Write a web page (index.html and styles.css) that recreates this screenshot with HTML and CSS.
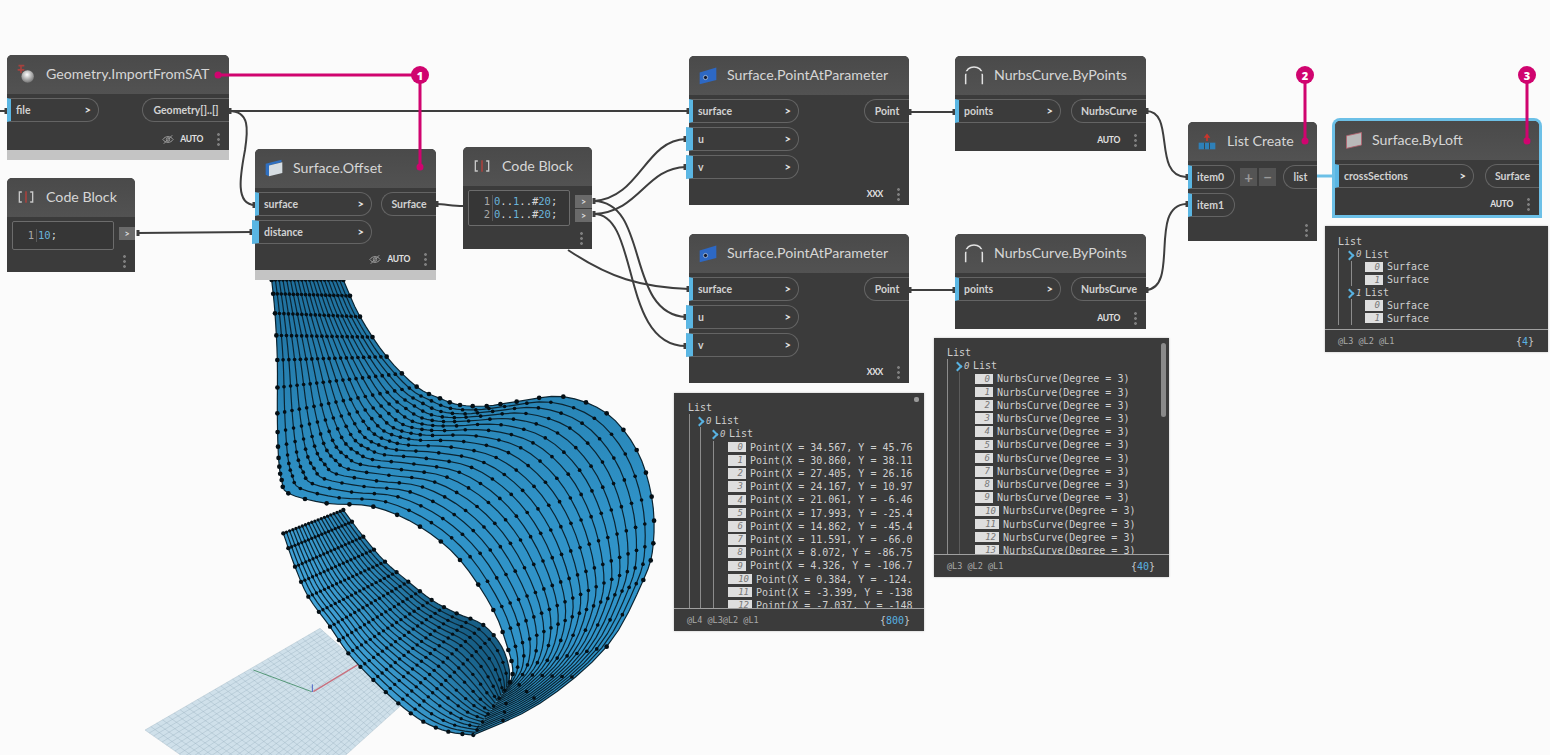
FILE: index.html
```html
<!DOCTYPE html>
<html lang="en">
<head>
<meta charset="utf-8">
<title>Dynamo graph</title>
<link rel="stylesheet" href="styles.css">
</head>
<body>
<main class="canvas">
  <svg class="surface" id="surface" viewBox="0 0 1590 1425" aria-hidden="true"></svg>

  <svg class="wires" viewBox="0 0 1550 755" aria-hidden="true">
    <path d="M0 111H8"/>
    <path d="M229 111C400 110 560 112 689 111"/>
    <path d="M229 111C250 111 248 130 245 150C241 172 234 205 255 205"/>
    <path d="M137 233L252 232"/>
    <path d="M436 204C445 204 452 206 463 206"/>
    <path d="M594 201C640 198 645 140 686 139"/>
    <path d="M594 214C640 212 645 168 686 167"/>
    <path d="M594 201C650 202 625 314 686 317"/>
    <path d="M594 214C640 214 620 346 686 346"/>
    <path d="M568 250C610 278 640 287 689 289"/>
    <path d="M909 112H955"/>
    <path d="M909 290H955"/>
    <path d="M1146 111C1176 111 1152 176 1186 177"/>
    <path d="M1146 290C1180 288 1148 206 1186 204"/>
    <path class="wire-live" d="M1317 176H1336"/>
    <path class="tick" d="M6 108v6M230 108v6M254 202v6M138 230v6M251 229v6M437 201v6M594 198v6M594 211v6M688 108v6M685 136v6M685 164v6M688 286v6M685 314v6M685 343v6M910 109v6M954 109v6M910 287v6M954 287v6M1147 108v6M1147 287v6M1187 174v6M1187 201v6"/>
  </svg>

  <article class="node n-import">
    <header class="head">
      <svg class="icon" viewBox="0 0 24 24"><path class="i-red" d="M3 2h7M6 2v9M2 7h8"/><defs><radialGradient id="ball" cx=".45" cy=".35" r=".7"><stop offset="0" stop-color="#fff"/><stop offset="1" stop-color="#6a6a6a"/></radialGradient></defs><circle cx="14" cy="15" r="7.500" fill="url(#ball)"/></svg>
      <h2>Geometry.ImportFromSAT</h2>
    </header>
    <div class="body">
      <div class="ports">
        <div class="inputs w-92"><div class="in">file<b>&gt;</b></div></div>
        <div class="out o-87">Geometry[]..[]</div>
      </div>
      <footer class="foot"><svg class="eye" viewBox="0 0 14 12"><path d="M1 6c3-4.500 9-4.500 12 0c-3 4.500-9 4.500-12 0zM2 11L12 1"/><circle cx="7" cy="6" r="2"/></svg><span>AUTO</span><i class="dots"></i></footer>
    </div>
    <div class="status"></div>
  </article>

  <article class="node n-code1">
    <header class="head">
      <svg class="icon" viewBox="0 0 24 24"><path class="i-lite" d="M7 6H4v12h3M17 6h3v12h-3"/><path class="i-red" d="M12 5v14"/></svg>
      <h2>Code Block</h2>
    </header>
    <div class="code">
      <div class="editor"><div class="cl"><span class="ln">1</span><span class="blue">10</span>;</div></div>
      <div class="code-outs"><span>&gt;</span></div>
    </div>
    <footer class="foot"><i class="dots"></i></footer>
  </article>

  <article class="node n-offset">
    <header class="head">
      <svg class="icon" viewBox="0 0 24 24"><path fill="#2f6fc0" d="M2 7l19-5v3l-15 4v13l-4-2z"/><path fill="#d6dde2" d="M6 9l16-4v13L6 22z"/></svg>
      <h2>Surface.Offset</h2>
    </header>
    <div class="body">
      <div class="ports">
        <div class="inputs w-117"><div class="in">surface<b>&gt;</b></div><div class="in wide">distance<b>&gt;</b></div></div>
        <div class="out o-55">Surface</div>
      </div>
      <footer class="foot"><svg class="eye" viewBox="0 0 14 12"><path d="M1 6c3-4.500 9-4.500 12 0c-3 4.500-9 4.500-12 0zM2 11L12 1"/><circle cx="7" cy="6" r="2"/></svg><span>AUTO</span><i class="dots"></i></footer>
    </div>
    <div class="status"></div>
  </article>

  <article class="node n-code2">
    <header class="head">
      <svg class="icon" viewBox="0 0 24 24"><path class="i-lite" d="M7 6H4v12h3M17 6h3v12h-3"/><path class="i-red" d="M12 5v14"/></svg>
      <h2>Code Block</h2>
    </header>
    <div class="code">
      <div class="editor">
        <div class="cl"><span class="ln">1</span><span class="blue">0</span>..<span class="blue">1</span>..#<span class="blue">20</span>;</div>
        <div class="cl"><span class="ln">2</span><span class="blue">0</span>..<span class="blue">1</span>..#<span class="blue">20</span>;</div>
      </div>
      <div class="code-outs"><span>&gt;</span><span>&gt;</span></div>
    </div>
    <footer class="foot"><i class="dots"></i></footer>
  </article>

  <article class="node n-pap1">
    <header class="head">
      <svg class="icon" viewBox="0 0 24 24"><path fill="#2d68c4" d="M2 9l20-6v15L2 23z"/><circle cx="9" cy="15" r="2.500" fill="#101830" stroke="#cde" stroke-width=".8"/></svg>
      <h2>Surface.PointAtParameter</h2>
    </header>
    <div class="body">
      <div class="ports">
        <div class="inputs w-110"><div class="in">surface<b>&gt;</b></div><div class="in wide">u<b>&gt;</b></div><div class="in wide">v<b>&gt;</b></div></div>
        <div class="out o-45">Point</div>
      </div>
      <footer class="foot"><span>XXX</span><i class="dots"></i></footer>
    </div>
  </article>

  <article class="node n-pap2">
    <header class="head">
      <svg class="icon" viewBox="0 0 24 24"><path fill="#2d68c4" d="M2 9l20-6v15L2 23z"/><circle cx="9" cy="15" r="2.500" fill="#101830" stroke="#cde" stroke-width=".8"/></svg>
      <h2>Surface.PointAtParameter</h2>
    </header>
    <div class="body">
      <div class="ports">
        <div class="inputs w-110"><div class="in">surface<b>&gt;</b></div><div class="in wide">u<b>&gt;</b></div><div class="in wide">v<b>&gt;</b></div></div>
        <div class="out o-45">Point</div>
      </div>
      <footer class="foot"><span>XXX</span><i class="dots"></i></footer>
    </div>
  </article>

  <article class="node n-nurbs1">
    <header class="head">
      <svg class="icon" viewBox="0 0 24 24"><path class="i-arc" d="M2 23V12C2 -1 22 -1 22 12v11"/><path class="i-gap" d="M0 9h6M18 9h6"/></svg>
      <h2>NurbsCurve.ByPoints</h2>
    </header>
    <div class="body">
      <div class="ports">
        <div class="inputs w-106"><div class="in">points<b>&gt;</b></div></div>
        <div class="out o-75">NurbsCurve</div>
      </div>
      <footer class="foot"><span>AUTO</span><i class="dots"></i></footer>
    </div>
  </article>

  <article class="node n-nurbs2">
    <header class="head">
      <svg class="icon" viewBox="0 0 24 24"><path class="i-arc" d="M2 23V12C2 -1 22 -1 22 12v11"/><path class="i-gap" d="M0 9h6M18 9h6"/></svg>
      <h2>NurbsCurve.ByPoints</h2>
    </header>
    <div class="body">
      <div class="ports">
        <div class="inputs w-106"><div class="in">points<b>&gt;</b></div></div>
        <div class="out o-75">NurbsCurve</div>
      </div>
      <footer class="foot"><span>AUTO</span><i class="dots"></i></footer>
    </div>
  </article>

  <article class="node n-list">
    <header class="head">
      <svg class="icon" viewBox="0 0 24 24"><path fill="#c9352c" d="M12 3l4 5h-3v4h-2V8H8z"/><path fill="#2e80b8" d="M2 14h20v8H2z"/><path stroke="#3b3b3b" d="M9 14v8M15 14v8"/></svg>
      <h2>List Create</h2>
    </header>
    <div class="body">
      <div class="ports">
        <div class="inputs w-47"><div class="in tight">item0</div><div class="in tight">item1</div></div>
        <div class="plusminus"><span>+</span><span>−</span></div>
        <div class="out o-34">list</div>
      </div>
      <footer class="foot"><i class="dots"></i></footer>
    </div>
  </article>

  <article class="node n-loft">
    <header class="head">
      <svg class="icon" viewBox="0 0 24 24"><path fill="#b9b9b9" stroke="#b5606e" d="M3 7l18-4v15L3 22z"/></svg>
      <h2>Surface.ByLoft</h2>
    </header>
    <div class="body">
      <div class="ports">
        <div class="inputs w-139"><div class="in">crossSections<b>&gt;</b></div></div>
        <div class="out o-54">Surface</div>
      </div>
      <footer class="foot"><span>AUTO</span><i class="dots"></i></footer>
    </div>
  </article>

  <section class="watch w-points">
    <div class="w-body">
      <div class="w-line">List</div>
      <div class="lvl l-a">
        <div class="w-line"><i class="chev"></i><em>0</em>List</div>
        <div class="lvl l-b">
          <div class="w-line"><i class="chev"></i><em>0</em>List</div>
          <div class="lvl l-c">
            <div class="w-line"><em class="idx">0</em>Point(X = 34.567, Y = 45.76</div>
            <div class="w-line"><em class="idx">1</em>Point(X = 30.860, Y = 38.11</div>
            <div class="w-line"><em class="idx">2</em>Point(X = 27.405, Y = 26.16</div>
            <div class="w-line"><em class="idx">3</em>Point(X = 24.167, Y = 10.97</div>
            <div class="w-line"><em class="idx">4</em>Point(X = 21.061, Y = -6.46</div>
            <div class="w-line"><em class="idx">5</em>Point(X = 17.993, Y = -25.4</div>
            <div class="w-line"><em class="idx">6</em>Point(X = 14.862, Y = -45.4</div>
            <div class="w-line"><em class="idx">7</em>Point(X = 11.591, Y = -66.0</div>
            <div class="w-line"><em class="idx">8</em>Point(X = 8.072, Y = -86.75</div>
            <div class="w-line"><em class="idx">9</em>Point(X = 4.326, Y = -106.7</div>
            <div class="w-line"><em class="idx two">10</em>Point(X = 0.384, Y = -124.</div>
            <div class="w-line"><em class="idx two">11</em>Point(X = -3.399, Y = -138</div>
            <div class="w-line"><em class="idx two">12</em>Point(X = -7.037, Y = -148</div>
          </div>
        </div>
      </div>
      <i class="knob"></i>
    </div>
    <footer class="w-foot"><span>@L4 @L3@L2 @L1</span><span class="count">{<b>800</b>}</span></footer>
  </section>

  <section class="watch w-curves">
    <div class="w-body">
      <div class="w-line">List</div>
      <div class="lvl l-d">
        <div class="w-line"><i class="chev"></i><em>0</em>List</div>
        <div class="lvl l-e">
          <div class="w-line"><em class="idx">0</em>NurbsCurve(Degree = 3)</div>
          <div class="w-line"><em class="idx">1</em>NurbsCurve(Degree = 3)</div>
          <div class="w-line"><em class="idx">2</em>NurbsCurve(Degree = 3)</div>
          <div class="w-line"><em class="idx">3</em>NurbsCurve(Degree = 3)</div>
          <div class="w-line"><em class="idx">4</em>NurbsCurve(Degree = 3)</div>
          <div class="w-line"><em class="idx">5</em>NurbsCurve(Degree = 3)</div>
          <div class="w-line"><em class="idx">6</em>NurbsCurve(Degree = 3)</div>
          <div class="w-line"><em class="idx">7</em>NurbsCurve(Degree = 3)</div>
          <div class="w-line"><em class="idx">8</em>NurbsCurve(Degree = 3)</div>
          <div class="w-line"><em class="idx">9</em>NurbsCurve(Degree = 3)</div>
          <div class="w-line"><em class="idx two">10</em>NurbsCurve(Degree = 3)</div>
          <div class="w-line"><em class="idx two">11</em>NurbsCurve(Degree = 3)</div>
          <div class="w-line"><em class="idx two">12</em>NurbsCurve(Degree = 3)</div>
          <div class="w-line"><em class="idx two">13</em>NurbsCurve(Degree = 3)</div>
        </div>
      </div>
      <i class="scroll"></i>
    </div>
    <footer class="w-foot"><span>@L3 @L2 @L1</span><span class="count">{<b>40</b>}</span></footer>
  </section>

  <section class="watch w-loft">
    <div class="w-body">
      <div class="w-line">List</div>
      <div class="lvl l-f">
        <div class="w-line"><i class="chev"></i><em>0</em>List</div>
        <div class="lvl l-g">
          <div class="w-line"><em class="idx">0</em>Surface</div>
          <div class="w-line"><em class="idx">1</em>Surface</div>
        </div>
        <div class="w-line"><i class="chev"></i><em>1</em>List</div>
        <div class="lvl l-g">
          <div class="w-line"><em class="idx">0</em>Surface</div>
          <div class="w-line"><em class="idx">1</em>Surface</div>
        </div>
      </div>
    </div>
    <footer class="w-foot"><span>@L3 @L2 @L1</span><span class="count">{<b>4</b>}</span></footer>
  </section>

  <svg class="callouts" viewBox="0 0 1550 755" aria-hidden="true">
    <path d="M218 75H420V167M1305 75V141M1527 75V141"/>
    <circle cx="218" cy="75" r="3.500"/><circle cx="420" cy="167" r="3.500"/><circle cx="1305" cy="141" r="3.500"/><circle cx="1527" cy="141" r="3.500"/>
  </svg>
  <span class="badge b-1">1</span>
  <span class="badge b-2">2</span>
  <span class="badge b-3">3</span>
</main>
<script src="app.js"></script>
</body>
</html>
```

FILE: styles.css
```css
* { box-sizing: border-box; }
html, body { margin: 0; height: 100%; }
body { background: #fbfbfb; font-family: "Lato", "Open Sans", "Liberation Sans", sans-serif; overflow: hidden; }
.canvas { position: relative; width: 1550px; height: 755px; overflow: hidden; }

/* free-canvas items */
.surface { position: absolute; left: 140px; top: 280px; width: 530px; height: 475px; }
.wires, .callouts { position: absolute; left: 0; top: 0; width: 1550px; height: 755px; pointer-events: none; }
.wires path { fill: none; stroke: #3e3e3e; stroke-width: 2; }
.wires .wire-live { stroke: #6cc0e7; stroke-width: 3; }
.wires .tick { stroke-width: 3; }
.callouts path { fill: none; stroke: #d0046f; stroke-width: 3; }
.callouts circle { fill: #d0046f; }

.node { position: absolute; display: flex; flex-direction: column; background: #3b3b3b; color: #d8d8d8; border-radius: 5px 5px 0 0; }
.n-import { left: 7px; top: 55px; width: 222px; height: 105px; }
.n-code1 { left: 7px; top: 178px; width: 128px; height: 94px; }
.n-offset { left: 255px; top: 149px; width: 181px; height: 131px; }
.n-code2 { left: 463px; top: 147px; width: 129px; height: 102px; }
.n-pap1 { left: 689px; top: 56px; width: 220px; height: 149px; }
.n-pap2 { left: 689px; top: 234px; width: 220px; height: 149px; }
.n-nurbs1 { left: 955px; top: 56px; width: 191px; height: 95px; }
.n-nurbs2 { left: 955px; top: 234px; width: 191px; height: 95px; }
.n-list { left: 1188px; top: 122px; width: 129px; height: 119px; }
.n-loft { left: 1335px; top: 121px; width: 204px; height: 94px; box-shadow: 0 0 0 3px #6cc0e7; }

.head { flex: none; height: 39px; display: flex; align-items: center; gap: 9px; padding: 0 0 2px 9px; background: linear-gradient(#4a4a4a, #525252); border-radius: 5px 5px 0 0; }
.n-import .head, .n-code1 .head, .n-code2 .head, .n-nurbs1 .head, .n-nurbs2 .head, .n-list .head { gap: 10px; }
.n-loft .head { gap: 8px; }
.head h2 { margin: 0; font-size: 14.200px; font-weight: 400; color: #d6d6d6; white-space: nowrap; }
.icon { flex: none; width: 20px; height: 20px; fill: none; overflow: visible; }
.i-red { stroke: #a5423e; stroke-width: 2; fill: none; }
.i-lite { stroke: #c8c8c8; stroke-width: 1.600; fill: none; }
.i-arc { stroke: #e2e2e2; stroke-width: 1.800; fill: none; }
.i-gap { stroke: #4e4e4e; stroke-width: 3; fill: none; }

.body { flex: 1; display: flex; flex-direction: column; min-height: 0; }
.ports { display: flex; justify-content: space-between; align-items: flex-start; padding-top: 4px; }
.inputs { display: flex; flex-direction: column; gap: 4px; }
.w-47 { width: 47px; } .w-92 { width: 92px; } .w-106 { width: 106px; } .w-110 { width: 110px; } .w-117 { width: 117px; } .w-139 { width: 139px; }
.in { height: 24px; display: flex; align-items: center; justify-content: space-between; padding: 0 7px 1px 5px; border: 1px solid #646464; border-left: 4px solid #5ab6e3; border-radius: 0 12px 12px 0; font-size: 10.500px; font-weight: 700; color: #d2d2d2; }
.in b { font-size: 11px; font-weight: 700; color: #e4e4e4; }
.in.wide { margin-left: -3px; border-left-width: 7px; }
.in.tight { padding-right: 0; }
.out { height: 24px; display: flex; align-items: center; justify-content: center; padding-bottom: 1px; border: 1px solid #646464; border-right: 0; border-radius: 12px 0 0 12px; font-size: 10.500px; font-weight: 700; color: #d2d2d2; white-space: nowrap; }
.o-34 { width: 34px; } .o-45 { width: 45px; } .o-54 { width: 54px; } .o-55 { width: 55px; } .o-75 { width: 75px; } .o-87 { width: 87px; }
.plusminus { display: flex; gap: 2px; margin: 3px auto 0 5px; }
.plusminus span { width: 17px; height: 18px; display: flex; align-items: center; justify-content: center; background: #545454; color: #9a9a9a; font-size: 15px; font-weight: 700; line-height: 1; }
.foot { flex: none; height: 22px; margin-top: auto; display: flex; align-items: center; justify-content: flex-end; padding-right: 9px; font-size: 8.500px; font-weight: 700; color: #e2e2e2; }
.foot span { margin-right: 14px; letter-spacing: -.3px; }
.eye { width: 12px; height: 11px; margin-right: 6px; fill: none; stroke: #a8a8a8; stroke-width: 1; }
.dots { width: 3px; height: 15px; background: radial-gradient(circle, #7e7e7e 1.300px, transparent 1.500px) 0 0 / 3px 5px repeat-y; }
.status { flex: none; height: 10px; background: #c4c4c4; }

.code { display: flex; align-items: flex-start; gap: 5px; padding: 4px 0 0 5px; }
.editor { width: 102px; padding: 4px 0; border: 1px solid #6c6c6c; border-radius: 2px; background: #363636; font-family: "DejaVu Sans Mono", monospace; font-size: 10.500px; line-height: 13px; color: #d8d8d8; }
.n-code1 .editor { padding: 7px 0; }
.cl { white-space: pre; }
.ln { display: inline-block; width: 24px; padding-right: 2px; margin-right: 1px; text-align: right; color: #a8a8a8; border-right: 1px solid #5a5a5a; }
.blue { color: #69b3da; }
.code-outs { display: flex; flex-direction: column; gap: 1px; padding-top: 5px; flex: 1; }
.n-code1 .code-outs { padding-top: 6px; }
.code-outs span { height: 13px; display: flex; align-items: center; justify-content: center; background: #6a6a6a; color: #ddd; font-size: 9px; font-weight: 700; }

.watch { position: absolute; display: flex; flex-direction: column; background: #3b3b3b; color: #cfcfcf; font-family: "DejaVu Sans Mono", monospace; font-size: 10px; box-shadow: 0 0 2px rgba(0,0,0,.25); }
.w-points { left: 674px; top: 393px; width: 250px; height: 238px; }
.w-curves { left: 934px; top: 338px; width: 235px; height: 239px; }
.w-loft { left: 1325px; top: 226px; width: 223px; height: 126px; }
.w-body { position: relative; flex: 1; overflow: hidden; min-height: 0; padding: 8px 0 0 14px; }
.w-curves .w-body, .w-loft .w-body { padding-left: 13px; }
.w-loft .w-body { padding-top: 9px; }
.w-line { height: 13.200px; display: flex; align-items: center; white-space: nowrap; }
.w-loft .w-line { height: 12.800px; }
.lvl { border-left: 1px solid #8c8c8c; }
.l-a { padding-left: 8px; margin-left: 1px; }
.l-b { margin-left: 2px; padding-left: 11px; }
.l-c { margin-left: 1px; padding-left: 14px; }
.l-d { padding-left: 8px; }
.l-e { margin-left: 3px; padding-left: 15px; border-left-color: #5c5c5c; }
.l-f { padding-left: 9px; }
.l-g { margin-left: 3px; padding-left: 13px; }
.chev { flex: none; width: 8px; height: 9px; position: relative; }
.chev::before { content: ""; position: absolute; left: -2px; top: 2px; width: 5px; height: 5px; border: solid #58b2e2; border-width: 2px 2px 0 0; transform: rotate(45deg); }
.w-line > em:not(.idx) { flex: none; width: 9px; font-size: 9px; color: #c8c8c8; }
.idx { flex: none; width: 18px; height: 10.500px; margin-right: 4px; padding-right: 3px; background: #dedede; color: #777; font-size: 9px; line-height: 10.500px; text-align: right; }
.idx.two { width: 24px; }
.knob { position: absolute; right: 5px; top: 4px; width: 5px; height: 5px; border-radius: 2px; background: #9a9a9a; }
.scroll { position: absolute; right: 3px; top: 5px; width: 5px; height: 74px; border-radius: 3px; background: #8a8a8a; }
.w-foot { flex: none; height: 23px; display: flex; align-items: center; justify-content: space-between; padding: 0 14px 0 13px; border-top: 1px solid #a0a0a0; font-size: 8.500px; color: #aaa; }
.count { font-size: 10px; color: #c8c8c8; }
.count b { font-weight: 400; color: #58b2e2; }

.badge { position: absolute; width: 18px; height: 18px; display: flex; align-items: center; justify-content: center; border-radius: 50%; background: #d0046f; color: #fff; font-family: "Open Sans", sans-serif; font-size: 11px; font-weight: 800; line-height: 1; }
.b-1 { left: 411px; top: 66px; }
.b-2 { left: 1296px; top: 66px; }
.b-3 { left: 1518px; top: 66px; }
```

FILE: app.js
```js
(function () {
  var svg = document.getElementById('surface');

  function spline(p, n) {
    var out = [];
    for (var i = 0; i < p.length - 1; i++) {
      var a = p[Math.max(i - 1, 0)], b = p[i], c = p[i + 1], d = p[Math.min(i + 2, p.length - 1)];
      for (var k = 0; k < n; k++) {
        var t = k / n, t2 = t * t, t3 = t2 * t;
        out.push([0, 1].map(function (j) {
          return 0.5 * (2 * b[j] + (c[j] - a[j]) * t + (2 * a[j] - 5 * b[j] + 4 * c[j] - d[j]) * t2 + (3 * b[j] - a[j] - 3 * c[j] + d[j]) * t3);
        }));
      }
    }
    out.push(p[p.length - 1]);
    return out;
  }
  function mix(a, b, s) { return [a[0] + (b[0] - a[0]) * s, a[1] + (b[1] - a[1]) * s]; }
  function line(pts) { return 'M' + pts.map(function (q) { return q[0].toFixed(1) + ' ' + q[1].toFixed(1); }).join('L'); }

  /* thinFrom: sample index after which crowded dots are dropped (the hairpin at the bottom) */
  function band(A, B, lines, fill, step, rEdge, rMid, thinFrom) {
    var a = spline(A, 4), b = spline(B, 4), h = '';
    h += '<path fill="' + fill + '" d="' + line(a.concat(b.slice().reverse())) + 'Z"/>';
    var paths = '', dots = '', kept = [];
    for (var s = 0; s <= lines; s++) {
      var f = s / lines;
      var pts = a.map(function (q, i) { return mix(q, b[i], f); });
      paths += line(pts);
      pts.forEach(function (q, i) {
        if (i % step !== 0) return;
        if (i >= thinFrom) {
          var crowded = kept.some(function (k) { return Math.hypot(k[0] - q[0], k[1] - q[1]) < 24; });
          if (crowded) return;
          kept.push(q);
        }
        var edge = s === 0 || s === lines;
        dots += '<circle cx="' + q[0].toFixed(1) + '" cy="' + q[1].toFixed(1) + '" r="' + (edge ? rEdge : rMid) + '"/>';
      });
    }
    h += '<path d="' + paths + '" fill="none" stroke="#0b2431" stroke-width="3.600"/>';
    h += '<g fill="#050f15">' + dots + '</g>';
    return h;
  }

  /* ground plane */
  var P00 = [15, 1350], P10 = [540, 1045], P11 = [790, 1270], P01 = [400, 1620];
  var g = '<path fill="#cfe0ea" d="' + line([P00, P10, P11, P01]) + 'Z"/>', grid = '';
  for (var i = 0; i <= 30; i++) {
    var u = i / 30;
    grid += line([mix(P00, P10, u), mix(P01, P11, u)]);
    grid += line([mix(P00, P01, u), mix(P10, P11, u)]);
  }
  g += '<path d="' + grid + '" fill="none" stroke="#8fa9b7" stroke-width="1.500" opacity=".65"/>';
  g += '<path d="M340 1170L515 1235" fill="none" stroke="#3f8a63" stroke-width="2.500"/>';
  g += '<path d="M520 1235L660 1150" fill="none" stroke="#c9707e" stroke-width="4"/>';
  g += '<path d="M517 1213V1236" fill="none" stroke="#4c63c4" stroke-width="3"/>';

  var defs = '<defs>' +
    '<linearGradient id="low" gradientUnits="userSpaceOnUse" x1="470" y1="960" x2="790" y2="760"><stop offset="0" stop-color="#46a9de"/><stop offset=".55" stop-color="#2f8bbd"/><stop offset="1" stop-color="#175f87"/></linearGradient>' +
    '<linearGradient id="main" gradientUnits="userSpaceOnUse" x1="0" y1="0" x2="0" y2="700"><stop offset="0" stop-color="#1f6f9c"/><stop offset=".6" stop-color="#2a88ba"/><stop offset="1" stop-color="#3093c8"/></linearGradient>' +
    '</defs>';

  var lowOut = [[430,760],[465,860],[505,950],[570,1040],[625,1120],[700,1200],[775,1270],[850,1325],[925,1355],[1000,1365]];
  var lowIn = [[610,690],[670,770],[735,845],[805,905],[875,960],[950,1000],[1030,1035],[1085,1100],[1108,1170],[1105,1215]];
  var mainA = [[395,0],[405,100],[412,240],[412,400],[414,500],[418,560],[425,600],[445,640],[560,670],[700,680],[840,740],[960,840],[1060,990],[1105,1110],[1118,1165],[1115,1195],[1105,1215]];
  var mainB = [[610,0],[660,110],[740,230],[830,320],[900,355],[960,375],[1040,378],[1130,365],[1270,350],[1400,400],[1490,510],[1535,650],[1540,790],[1510,900],[1400,1100],[1200,1270],[1000,1365]];

  svg.innerHTML = defs + g +
    band(lowOut, lowIn, 19, 'url(#low)', 2, 6.500, 5, 28) +
    band(mainA, mainB, 19, 'url(#main)', 2, 7, 5.500, 52);
})();
```
